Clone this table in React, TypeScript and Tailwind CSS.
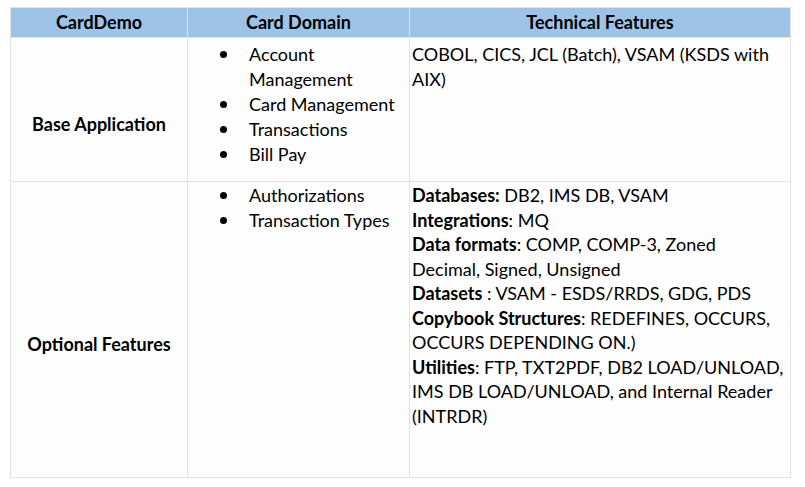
import React from "react";

const Bullet = ({ children }: { children: React.ReactNode }) => (
  <li className="flex">
    <span className="w-[61px] shrink-0 flex justify-start pl-[32px] pt-[9px]">
      <span className="block w-[7px] h-[7px] rounded-full bg-black" />
    </span>
    <span className="whitespace-nowrap">{children}</span>
  </li>
);

export default function App() {
  return (
    <div
      className="w-[805px] h-[487px] bg-white pl-[10px] pt-[7px] text-black"
      style={{ fontFamily: "Lato, 'Open Sans', sans-serif" }}
    >
      <div className="grid grid-cols-[176px_221px_380px] grid-rows-[29px_143px_295px] gap-px bg-[#e2e2e2] p-px w-[781px] text-[18px] leading-[24.5px]">
        {/* header */}
        <div className="bg-[#9dc3e6] flex items-center justify-center font-bold">CardDemo</div>
        <div className="bg-[#9dc3e6] flex items-center justify-center font-bold">Card Domain</div>
        <div className="bg-[#9dc3e6] flex items-center justify-center font-bold">Technical Features</div>

        {/* row 1 */}
        <div className="bg-[#fefefe] flex items-center justify-center font-bold pt-[30px]">Base Application</div>
        <div className="bg-[#fefefe] pt-[4px] leading-[25px]">
          <ul>
            <Bullet>
              Account
              <br />
              Management
            </Bullet>
            <Bullet>Card Management</Bullet>
            <Bullet>Transactions</Bullet>
            <Bullet>Bill Pay</Bullet>
          </ul>
        </div>
        <div className="bg-[#fefefe] pt-[4px] pl-[2px] whitespace-nowrap">
          COBOL, CICS, JCL (Batch), VSAM (KSDS with
          <br />
          AIX)
        </div>

        {/* row 2 */}
        <div className="bg-[#fefefe] flex items-center justify-center font-bold pt-[30px]">Optional Features</div>
        <div className="bg-[#fefefe] pt-[1px] leading-[25px]">
          <ul>
            <Bullet>Authorizations</Bullet>
            <Bullet>Transaction Types</Bullet>
          </ul>
        </div>
        <div className="bg-[#fefefe] pt-[1px] pl-[2px] whitespace-nowrap">
          <div><b>Databases:</b> DB2, IMS DB, VSAM</div>
          <div><b>Integrations</b>: MQ</div>
          <div><b>Data formats</b>: COMP, COMP-3, Zoned</div>
          <div>Decimal, Signed, Unsigned</div>
          <div><b>Datasets</b> : VSAM - ESDS/RRDS, GDG, PDS</div>
          <div><b>Copybook Structures</b>: REDEFINES, OCCURS,</div>
          <div>OCCURS DEPENDING ON.)</div>
          <div><b>Utilities</b>: FTP, TXT2PDF, DB2 LOAD/UNLOAD,</div>
          <div>IMS DB LOAD/UNLOAD, and Internal Reader</div>
          <div>(INTRDR)</div>
        </div>
      </div>
    </div>
  );
}
